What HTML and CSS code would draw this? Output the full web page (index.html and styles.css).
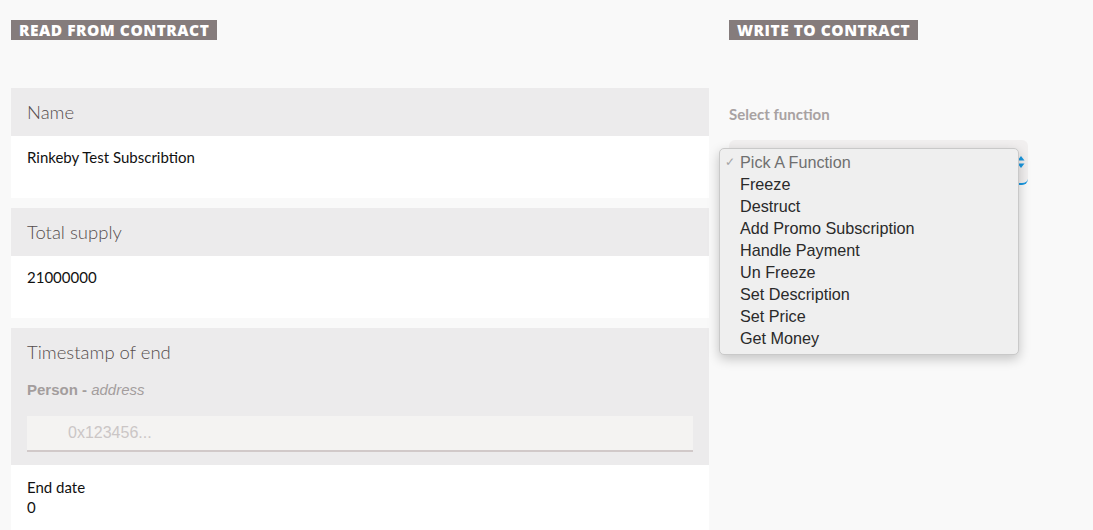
FILE: index.html
```html
<!DOCTYPE html>
<html>
<head>
<meta charset="utf-8">
<link rel="stylesheet" href="styles.css">
</head>
<body>
<div class="page">
  <section class="col read">
    <h2 class="badge">Read from contract</h2>
    <div class="card">
      <div class="card-head"><div class="card-title">Name</div></div>
      <div class="card-body"><div class="value">Rinkeby Test Subscribtion</div></div>
    </div>
    <div class="card">
      <div class="card-head"><div class="card-title">Total supply</div></div>
      <div class="card-body"><div class="value">21000000</div></div>
    </div>
    <div class="card">
      <div class="card-head tall">
        <div class="card-title">Timestamp of end</div>
        <div class="param">Person - <em>address</em></div>
        <div class="input"><span class="placeholder">0x123456...</span></div>
      </div>
      <div class="card-body short">
        <div class="value">End date</div>
        <div class="value">0</div>
      </div>
    </div>
  </section>
  <section class="col write">
    <h2 class="badge">Write to contract</h2>
    <div class="field-label">Select function</div>
    <div class="select-wrap">
      <div class="select">
        <svg class="stepper" width="8" height="14" viewBox="0 0 8 14"><path d="M4 1 L7.5 5.5 H0.5 Z M4 13 L7.5 8.5 H0.5 Z" fill="#1a98e0"/></svg>
      </div>
      <ul class="menu">
        <li class="selected"><span class="check">✓</span>Pick A Function</li>
        <li>Freeze</li>
        <li>Destruct</li>
        <li>Add Promo Subscription</li>
        <li>Handle Payment</li>
        <li>Un Freeze</li>
        <li>Set Description</li>
        <li>Set Price</li>
        <li>Get Money</li>
      </ul>
    </div>
  </section>
</div>
</body>
</html>
```

FILE: styles.css
```css
* { box-sizing: border-box; }
html, body { margin: 0; padding: 0; background: #f9f9f9; }
body { font-family: "Lato", "Liberation Sans", sans-serif; overflow: hidden; height: 530px; }

.page {
  display: flex;
  align-items: flex-start;
  gap: 20px;
  padding: 20px 0 0 11px;
}
.col { display: flex; flex-direction: column; align-items: flex-start; }
.col.read { width: 698px; flex: none; align-items: stretch; }
.col.write { width: 300px; flex: none; }

.badge {
  display: block;
  align-self: flex-start;
  margin: 0;
  height: 20px;
  padding: 0 8px;
  background: #857c7c;
  color: #fff;
  font-family: "Open Sans", "Liberation Sans", sans-serif;
  font-weight: 800;
  font-size: 15.5px;
  line-height: 20px;
  text-transform: uppercase;
  letter-spacing: 0.5px;
  white-space: nowrap;
}

.read .badge { margin-bottom: 48px; }

.card { margin-bottom: 10px; }
.card-head {
  background: #ecebec;
  height: 48px;
  padding: 0 16px;
}
.card-title {
  font-family: "Lato", sans-serif;
  font-weight: 300;
  font-size: 18.5px;
  color: #554d4d;
  line-height: 48px;
}
.card-head.tall { height: 137px; }
.param {
  margin-top: 4px;
  font-family: "Liberation Sans", sans-serif;
  font-weight: bold;
  font-size: 15px;
  color: #a39d9d;
  line-height: 20px;
}
.param em { font-weight: normal; font-style: italic; }
.input {
  margin-top: 16px;
  height: 36px;
  background: #f4f3f2;
  border-bottom: 2px solid #d1c9c9;
  padding-left: 41px;
  font-family: "Liberation Sans", sans-serif;
  font-size: 16px;
  line-height: 34px;
  color: #cbc6c6;
}

.card-body {
  background: #fff;
  height: 62px;
  padding: 11px 16px 0;
}
.card-body.short { padding-top: 12px; height: 80px; }
.value {
  font-family: "Lato", sans-serif;
  font-size: 15px;
  color: #111;
  line-height: 20px;
}

.field-label {
  margin-top: 64px;
  font-family: "Lato", sans-serif;
  font-weight: bold;
  font-size: 15px;
  color: #a8a2a2;
  line-height: 20px;
}
.select-wrap { position: relative; margin-top: 16px; }
.select {
  width: 299px;
  height: 45px;
  background: #f1efef;
  border-radius: 6px;
  border-bottom: 2px solid #1a98e0;
  position: relative;
}
.stepper { position: absolute; right: 3px; top: 15px; }

.menu {
  position: absolute;
  left: -10px;
  top: 8px;
  width: 300px;
  height: 207px;
  margin: 0;
  padding: 2px 0 0;
  list-style: none;
  background: #efefef;
  border: 1px solid #c9c9c9;
  border-radius: 5px;
  box-shadow: 0 4px 12px rgba(0,0,0,0.22);
}
.menu li {
  position: relative;
  height: 22px;
  line-height: 22px;
  padding-left: 20px;
  font-family: "Liberation Sans", sans-serif;
  font-size: 16.2px;
  color: #2a2a2a;
}
.menu li.selected { color: #6f6f6f; }
.check {
  position: absolute;
  left: 5px;
  top: 0;
  font-size: 12px;
  color: #a5a5a5;
}
```
